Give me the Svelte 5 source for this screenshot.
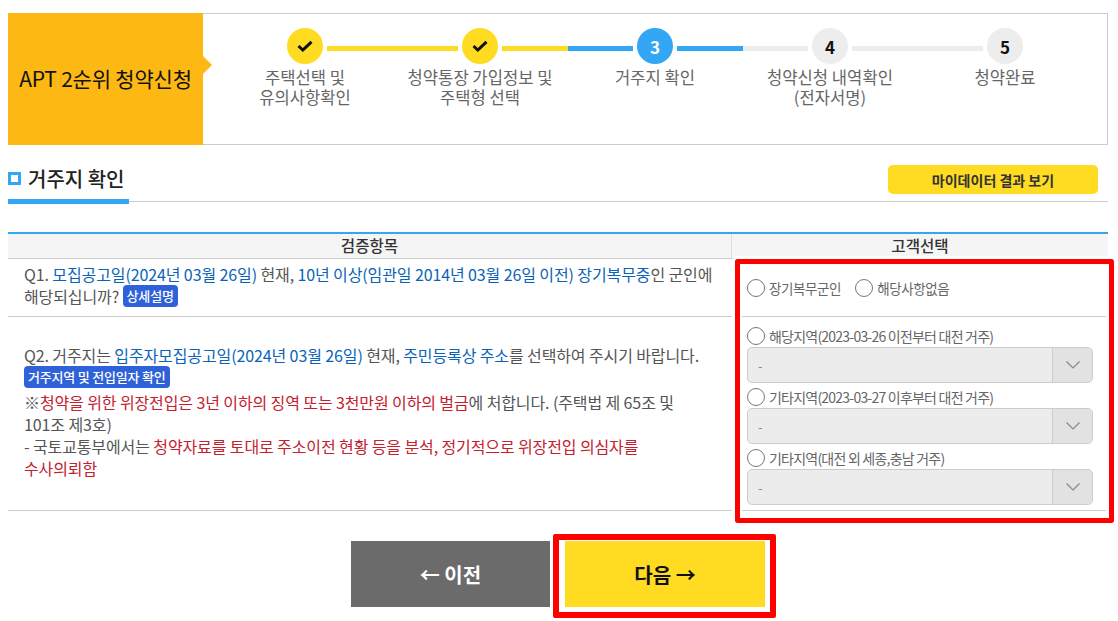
<script>
  const steps = [
    { label: ["주택선택 및", "유의사항확인"], state: "done" },
    { label: ["청약통장 가입정보 및", "주택형 선택"], state: "done" },
    { label: ["거주지 확인"], state: "current" },
    { label: ["청약신청 내역확인", "(전자서명)"], state: "todo" },
    { label: ["청약완료"], state: "todo" }
  ];

  const regions = [
    "해당지역(2023-03-26 이전부터 대전 거주)",
    "기타지역(2023-03-27 이후부터 대전 거주)",
    "기타지역(대전 외 세종,충남 거주)"
  ];
</script>

<div class="page">
  <div class="stepbox">
    <div class="title">APT 2순위 청약신청</div>
    <ol class="steps">
      {#each steps as step, i}
        <li class="step {step.state}">
          <div class="track">
            <span class="line left" class:hidden={i === 0}></span>
            <span class="dot">
              {#if step.state === "done"}
                <svg width="16" height="12" viewBox="0 0 16 12">
                  <path d="M1.5 6 5.8 10 14.5 1.8" fill="none" stroke="#111" stroke-width="3" />
                </svg>
              {:else}
                {i + 1}
              {/if}
            </span>
            <span class="line right" class:hidden={i === steps.length - 1}></span>
          </div>
          <p>{step.label[0]}{#if step.label[1]}<br />{step.label[1]}{/if}</p>
        </li>
      {/each}
    </ol>
  </div>

  <div class="section">
    <h2><span class="bullet"></span>거주지 확인</h2>
    <button class="mydata" type="button">마이데이터 결과 보기</button>
  </div>

  <div class="table">
    <div class="th left-col">검증항목</div>
    <div class="th">고객선택</div>

    <div class="td question q1">
      <p>
        Q1. <b>모집공고일(2024년 03월 26일)</b> 현재, <b>10년 이상(임관일 2014년 03월 26일 이전) 장기복무중</b>인 군인에<br />
        해당되십니까? <span class="tag">상세설명</span>
      </p>
    </div>
    <div class="td choice q1">
      <label class="radio"><i></i>장기복무군인</label>
      <label class="radio"><i></i>해당사항없음</label>
    </div>

    <div class="td question q2">
      <p>
        Q2. 거주지는 <b>입주자모집공고일(2024년 03월 26일)</b> 현재, <b>주민등록상 주소</b>를 선택하여 주시기 바랍니다.<br />
        <span class="tag wide">거주지역 및 전입일자 확인</span><br />
        ※<em>청약을 위한 위장전입은 3년 이하의 징역 또는 3천만원 이하의 벌금</em>에 처합니다. (주택법 제 65조 및<br />
        101조 제3호)<br />
        - 국토교통부에서는 <em>청약자료를 토대로 주소이전 현황 등을 분석, 정기적으로 위장전입 의심자를<br />
        수사의뢰함</em>
      </p>
    </div>
    <div class="td regions q2">
      {#each regions as region}
        <label class="radio small"><i></i>{region}</label>
        <div class="select">
          <span class="value">-</span>
          <span class="arrow">
            <svg width="16" height="10" viewBox="0 0 16 10">
              <path d="M1.5 1.5 8 8l6.5-6.5" fill="none" stroke="#888" stroke-width="1.2" />
            </svg>
          </span>
        </div>
      {/each}
    </div>
  </div>

  <div class="actions">
    <button class="prev" type="button">← 이전</button>
    <button class="next" type="button">다음 →</button>
  </div>

  <span class="mark mark-choice"></span>
  <span class="mark mark-next"></span>
</div>

<style>
  :global(body) {
    margin: 0;
    background: #fff;
    font-family: "Noto Sans CJK KR", "Noto Sans", sans-serif;
    color: #555;
  }

  .page {
    position: relative;
    width: 1100px;
    height: 621px;
    padding: 13px 10px 0 8px;
    overflow: hidden;
  }

  .stepbox {
    display: flex;
    height: 132px;
    box-sizing: border-box;
    border: 1px solid #ccc;
    border-left: 0;
  }

  .title {
    position: relative;
    width: 195px;
    margin: -1px 0;
    padding-bottom: 2px;
    box-sizing: border-box;
    display: flex;
    align-items: center;
    justify-content: center;
    background: #fdb813;
    color: #111;
    font-size: 21px;
    letter-spacing: -0.2px;
    white-space: nowrap;
  }

  .title::after {
    content: "";
    position: absolute;
    left: 100%;
    top: 43px;
    border-left: 9px solid #fdb813;
    border-top: 9px solid transparent;
    border-bottom: 9px solid transparent;
  }

  .steps {
    display: flex;
    margin: 0;
    padding: 14px 0 0 14.5px;
    list-style: none;
  }

  .step {
    width: 175px;
    text-align: center;
  }

  .track {
    display: flex;
    align-items: center;
    justify-content: space-between;
    height: 36px;
  }

  .line {
    width: 65.5px;
    height: 5px;
    margin-top: 5px;
    background: #ededed;
  }

  .line.hidden {
    visibility: hidden;
  }

  .dot {
    width: 36px;
    height: 36px;
    border-radius: 50%;
    display: flex;
    align-items: center;
    justify-content: center;
    background: #ededed;
    color: #111;
    font-size: 17px;
    font-weight: 700;
  }

  .done .dot,
  .done .line {
    background: #ffdc21;
  }

  .current .dot,
  .current .line {
    background: #33a6f5;
  }

  .current .dot {
    color: #fff;
  }

  .step p {
    margin: 3px 0 0;
    font-size: 16.6px;
    line-height: 20px;
    color: #666;
    white-space: nowrap;
  }

  .section {
    display: flex;
    align-items: flex-start;
    justify-content: space-between;
    height: 37px;
    box-sizing: border-box;
    margin-top: 20px;
    border-bottom: 1px solid #ccc;
  }

  h2 {
    display: flex;
    align-items: center;
    box-sizing: border-box;
    width: 121px;
    height: 39px;
    margin: 0;
    padding-bottom: 7px;
    border-bottom: 5px solid #33a6f5;
    font-size: 20px;
    font-weight: 500;
    color: #222;
  }

  .bullet {
    flex: none;
    width: 7px;
    height: 7px;
    margin-right: 7px;
    border: 3px solid #33a6f5;
  }

  .mydata {
    width: 210px;
    height: 29px;
    margin-right: 10px;
    border: 0;
    border-radius: 5px;
    background: #ffdc21;
    color: #333;
    font: 700 14px "Noto Sans CJK KR", sans-serif;
  }

  .table {
    display: grid;
    grid-template-columns: 724px 376px;
    grid-template-rows: 25px 58px 194px;
    margin-top: 30px;
    border-top: 2px solid #33a6f5;
    box-sizing: border-box;
    height: 279px;
  }

  .th {
    display: flex;
    align-items: center;
    justify-content: center;
    padding-bottom: 2px;
    background: #f5f5f5;
    border-bottom: 1px solid #ccc;
    font-size: 15.6px;
    font-weight: 500;
    color: #333;
  }

  .left-col {
    border-right: 1px solid #ddd;
  }

  .td {
    box-sizing: border-box;
    border-bottom: 1px solid #ccc;
  }

  .question {
    display: flex;
    align-items: center;
    padding: 0 16px;
    font-size: 16px;
    letter-spacing: -0.11px;
    line-height: 22px;
  }

  .question.q1 {
    padding-bottom: 6px;
  }

  .question.q2 {
    padding-bottom: 4px;
  }

  .question p {
    margin: 0;
    white-space: nowrap;
  }

  .question b {
    font-weight: 400;
    color: #0a63b8;
  }

  .question em {
    font-style: normal;
    color: #c4202e;
  }

  .tag {
    display: inline-block;
    height: 22px;
    padding: 0 4px;
    border-radius: 4px;
    background: #2f62d9;
    color: #fff;
    font-size: 13px;
    font-weight: 500;
    letter-spacing: -0.2px;
    vertical-align: top;
  }

  .tag.wide {
    margin-bottom: 3px;
  }

  .choice {
    display: flex;
    align-items: center;
    gap: 14px;
    padding-left: 15px;
  }

  .regions {
    display: flex;
    flex-direction: column;
    padding: 10px 15px 0;
  }

  .radio {
    display: flex;
    align-items: center;
    gap: 4px;
    font-size: 13.5px;
    letter-spacing: -0.4px;
    color: #666;
    white-space: nowrap;
  }

  .radio.small {
    height: 18px;
    letter-spacing: -0.78px;
    font-size: 14px;
  }

  .radio i {
    width: 16px;
    height: 16px;
    border: 1px solid #777;
    border-radius: 50%;
    background: #fff;
  }

  .select {
    display: flex;
    justify-content: space-between;
    box-sizing: border-box;
    width: 346px;
    height: 36px;
    margin: 2px 0 5px;
    border: 1px solid #ccc;
    border-radius: 5px;
    background: #ececec;
    overflow: hidden;
  }

  .value {
    padding: 8px 0 0 10px;
    font-size: 13px;
    color: #888;
  }

  .arrow {
    display: flex;
    align-items: center;
    justify-content: center;
    width: 39px;
    border-left: 1px solid #ccc;
    background: #e2e2e2;
  }

  .actions {
    display: flex;
    justify-content: center;
    gap: 15px;
    margin-top: 30px;
  }

  .actions button {
    height: 66px;
    border: 0;
    font: 700 20px "Noto Sans CJK KR", sans-serif;
  }

  .prev {
    width: 199px;
    background: #6b6b6b;
    color: #fff;
  }

  .next {
    width: 200px;
    background: #ffdc21;
    color: #111;
  }

  .mark {
    position: absolute;
    box-sizing: border-box;
    border: 5px solid #f00;
    border-radius: 2px;
  }

  .mark-choice {
    left: 735px;
    top: 259px;
    width: 379px;
    height: 264px;
    outline: 3px solid #fff;
    box-shadow: inset 2px 0 0 #fff, inset -3px 0 0 #fff;
  }

  .mark-next {
    left: 553px;
    top: 534px;
    width: 223px;
    height: 84px;
    border-width: 6px;
  }
</style>
